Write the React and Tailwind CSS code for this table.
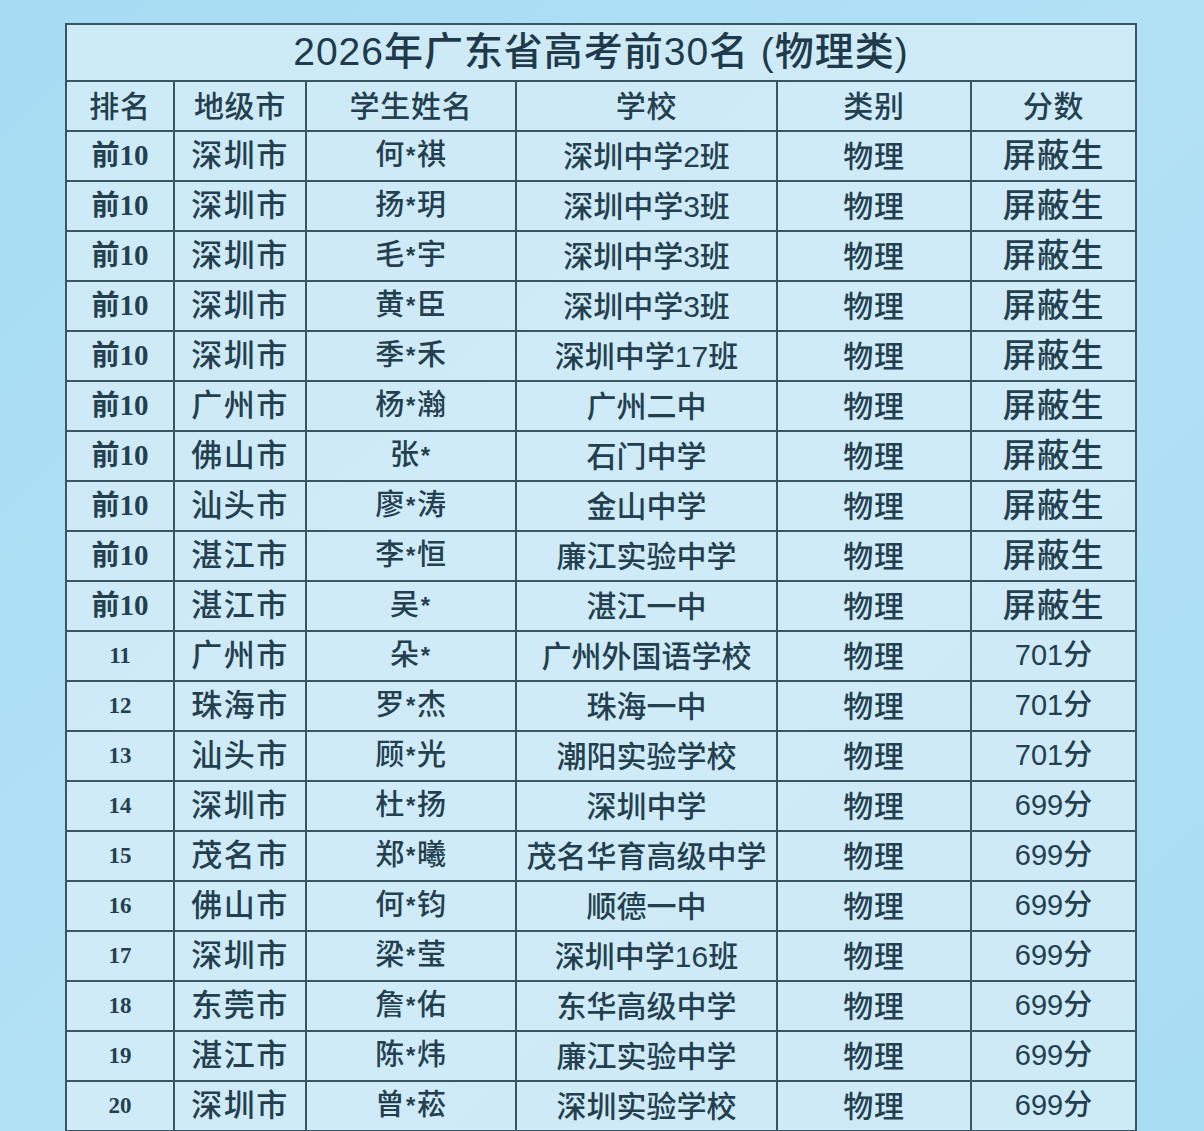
import React from 'react';

const rows = [
  ['前10', '深圳市', '何*祺', '深圳中学2班', '物理', '屏蔽生'],
  ['前10', '深圳市', '扬*玥', '深圳中学3班', '物理', '屏蔽生'],
  ['前10', '深圳市', '毛*宇', '深圳中学3班', '物理', '屏蔽生'],
  ['前10', '深圳市', '黄*臣', '深圳中学3班', '物理', '屏蔽生'],
  ['前10', '深圳市', '季*禾', '深圳中学17班', '物理', '屏蔽生'],
  ['前10', '广州市', '杨*瀚', '广州二中', '物理', '屏蔽生'],
  ['前10', '佛山市', '张*', '石门中学', '物理', '屏蔽生'],
  ['前10', '汕头市', '廖*涛', '金山中学', '物理', '屏蔽生'],
  ['前10', '湛江市', '李*恒', '廉江实验中学', '物理', '屏蔽生'],
  ['前10', '湛江市', '吴*', '湛江一中', '物理', '屏蔽生'],
  ['11', '广州市', '朵*', '广州外国语学校', '物理', '701分'],
  ['12', '珠海市', '罗*杰', '珠海一中', '物理', '701分'],
  ['13', '汕头市', '顾*光', '潮阳实验学校', '物理', '701分'],
  ['14', '深圳市', '杜*扬', '深圳中学', '物理', '699分'],
  ['15', '茂名市', '郑*曦', '茂名华育高级中学', '物理', '699分'],
  ['16', '佛山市', '何*钧', '顺德一中', '物理', '699分'],
  ['17', '深圳市', '梁*莹', '深圳中学16班', '物理', '699分'],
  ['18', '东莞市', '詹*佑', '东华高级中学', '物理', '699分'],
  ['19', '湛江市', '陈*炜', '廉江实验中学', '物理', '699分'],
  ['20', '深圳市', '曾*菘', '深圳实验学校', '物理', '699分'],
];

const headers = ['排名', '地级市', '学生姓名', '学校', '类别', '分数'];

const serif = { fontFamily: '"Liberation Serif", "Noto Sans CJK SC", serif' };
const sans = { fontFamily: '"Liberation Sans", "Noto Sans CJK SC", sans-serif' };

const cell = 'h-[50px] flex items-center justify-center border-r-2 border-b-2 border-[#3a5664] text-[#24404f]';

function Name({ text }) {
  const [a, b] = text.split('*');
  return (
    <span className="text-[29px] font-medium tracking-wide">
      {a}
      <span className="text-[24px] font-bold relative -top-[1px] mx-[1px]">*</span>
      {b}
    </span>
  );
}

export default function App() {
  return (
    <div className="w-[1204px] h-[1131px] overflow-hidden bg-gradient-to-br from-[#a6dcf4] via-[#b2e1f5] to-[#a9ddf4] pt-[23px] pl-[65px]" style={sans}>
      <div className="w-[1072px] border-l-2 border-t-2 border-[#3a5664] bg-[#d4ecf7]/85">
        <div className="h-[57px] flex items-center justify-center border-r-2 border-b-2 border-[#3a5664] text-[39px] font-medium text-[#1f3a4a] tracking-wide">
          2026年广东省高考前30名 (物理类)
        </div>
        <div className="grid grid-cols-[108px_132px_210px_261px_194px_165px]">
          {headers.map((h) => (
            <div key={h} className={cell}>
              <span className="text-[30px] font-medium tracking-wide">{h}</span>
            </div>
          ))}
          {rows.map((r, i) => (
            <React.Fragment key={i}>
              <div className={cell} style={serif}>
                {r[0].startsWith('前') ? (
                  <span className="text-[29px] font-bold">
                    <span className="text-[28px]">前</span>10
                  </span>
                ) : (
                  <span className="text-[23px] font-semibold">{r[0]}</span>
                )}
              </div>
              <div className={cell}>
                <span className="text-[31px] font-medium tracking-wider">{r[1]}</span>
              </div>
              <div className={cell}>
                <Name text={r[2]} />
              </div>
              <div className={cell}>
                <span className="text-[30px] font-medium">{r[3]}</span>
              </div>
              <div className={cell}>
                <span className="text-[30px] font-medium tracking-wide">{r[4]}</span>
              </div>
              <div className={cell}>
                {r[5] === '屏蔽生' ? (
                  <span className="text-[33px] font-medium tracking-wide">{r[5]}</span>
                ) : (
                  <span className="text-[29px] font-medium">{r[5]}</span>
                )}
              </div>
            </React.Fragment>
          ))}
        </div>
      </div>
    </div>
  );
}
